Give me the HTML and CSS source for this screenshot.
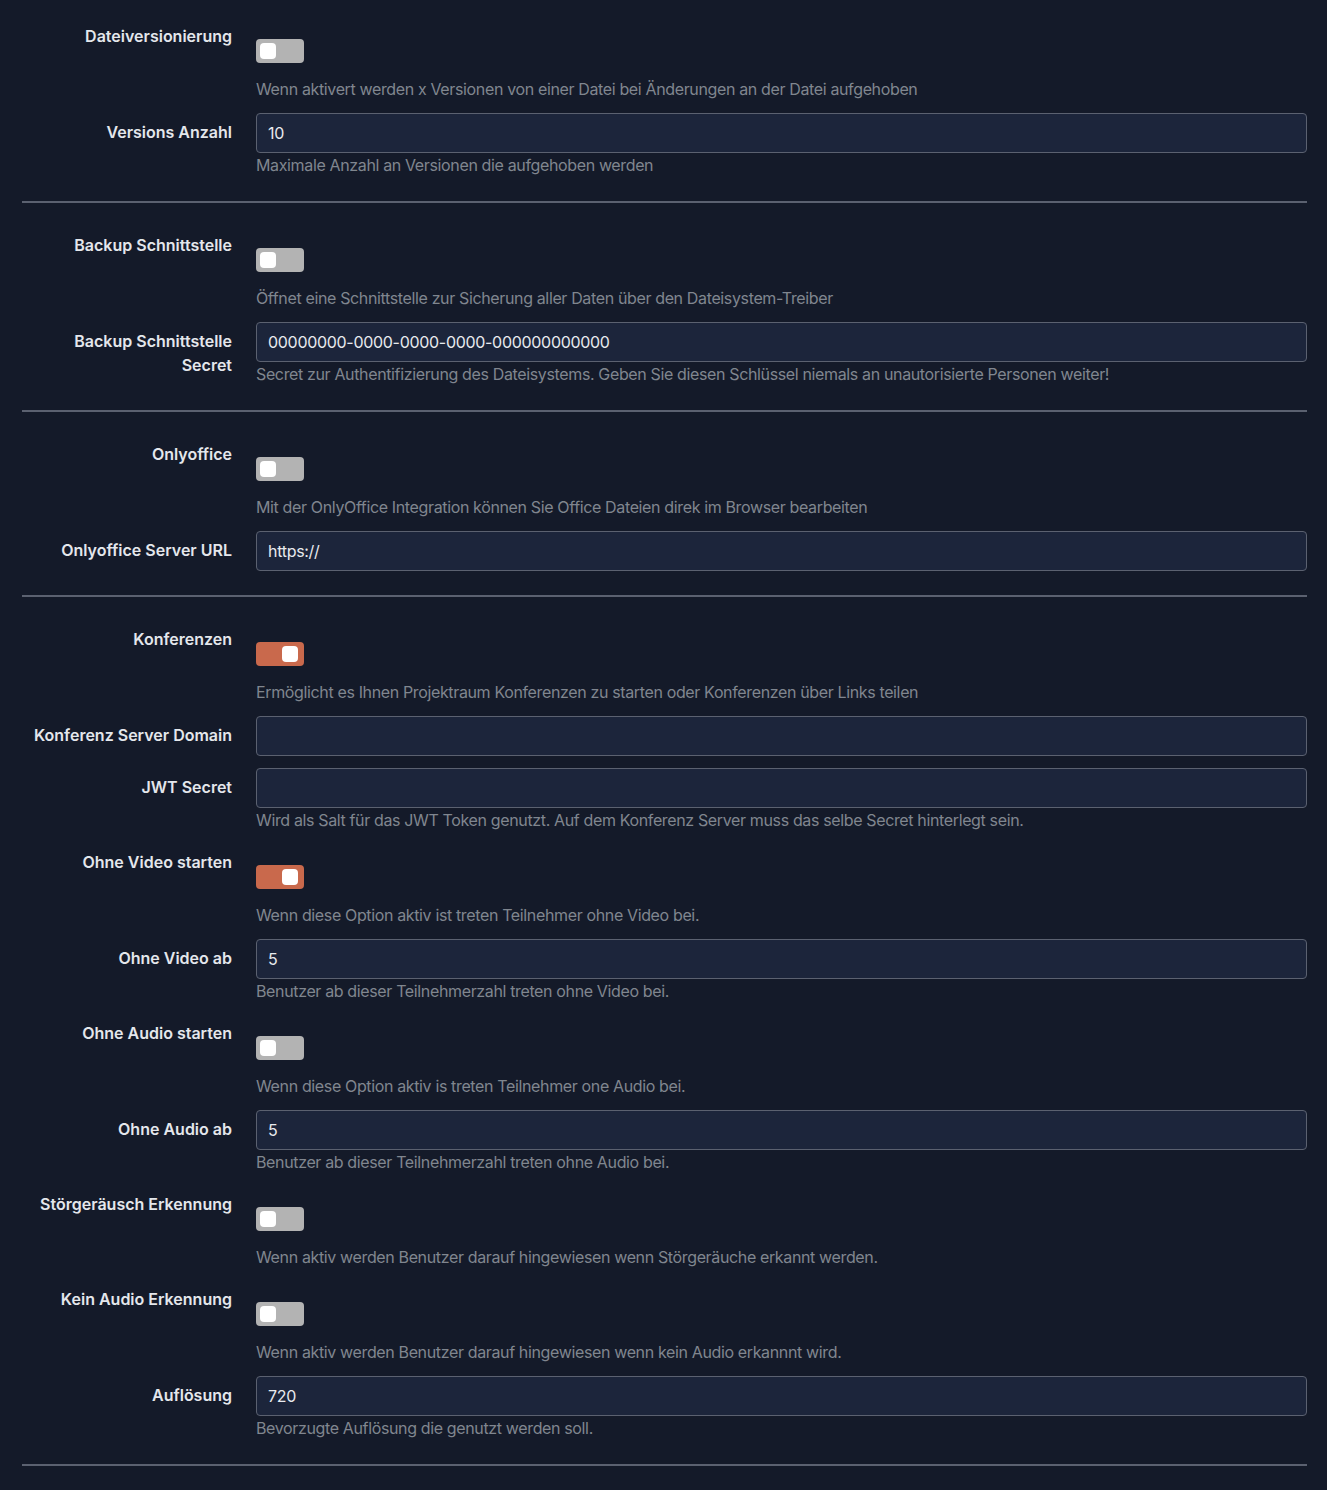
FILE: index.html
```html
<!DOCTYPE html>
<html lang="de">
<head>
<meta charset="utf-8">
<title>Einstellungen</title>
<link rel="stylesheet" href="styles.css">
</head>
<body>
<div class="settings">
  <section class="section">
    <div class="row toggle-row">
      <label class="label">Dateiversionierung</label>
      <div class="control">
        <span class="toggle"><span class="knob"></span></span>
        <div class="help">Wenn aktivert werden x Versionen von einer Datei bei Änderungen an der Datei aufgehoben</div>
      </div>
    </div>
    <div class="row input-row last">
      <label class="label">Versions Anzahl</label>
      <div class="control">
        <div class="input">10</div>
        <div class="help tight">Maximale Anzahl an Versionen die aufgehoben werden</div>
      </div>
    </div>
  </section>
  <hr class="divider">
  <section class="section">
    <div class="row toggle-row">
      <label class="label">Backup Schnittstelle</label>
      <div class="control">
        <span class="toggle"><span class="knob"></span></span>
        <div class="help">Öffnet eine Schnittstelle zur Sicherung aller Daten über den Dateisystem-Treiber</div>
      </div>
    </div>
    <div class="row input-row last">
      <label class="label">Backup Schnittstelle Secret</label>
      <div class="control">
        <div class="input">00000000-0000-0000-0000-000000000000</div>
        <div class="help tight">Secret zur Authentifizierung des Dateisystems. Geben Sie diesen Schlüssel niemals an unautorisierte Personen weiter!</div>
      </div>
    </div>
  </section>
  <hr class="divider">
  <section class="section">
    <div class="row toggle-row">
      <label class="label">Onlyoffice</label>
      <div class="control">
        <span class="toggle"><span class="knob"></span></span>
        <div class="help">Mit der OnlyOffice Integration können Sie Office Dateien direk im Browser bearbeiten</div>
      </div>
    </div>
    <div class="row input-row last nohelp">
      <label class="label">Onlyoffice Server URL</label>
      <div class="control">
        <div class="input">https://</div>
      </div>
    </div>
  </section>
  <hr class="divider">
  <section class="section">
    <div class="row toggle-row">
      <label class="label">Konferenzen</label>
      <div class="control">
        <span class="toggle on"><span class="knob"></span></span>
        <div class="help">Ermöglicht es Ihnen Projektraum Konferenzen zu starten oder Konferenzen über Links teilen</div>
      </div>
    </div>
    <div class="row input-row nohelp">
      <label class="label">Konferenz Server Domain</label>
      <div class="control">
        <div class="input"></div>
      </div>
    </div>
    <div class="row input-row">
      <label class="label">JWT Secret</label>
      <div class="control">
        <div class="input"></div>
        <div class="help tight">Wird als Salt für das JWT Token genutzt. Auf dem Konferenz Server muss das selbe Secret hinterlegt sein.</div>
      </div>
    </div>
    <div class="row toggle-row">
      <label class="label">Ohne Video starten</label>
      <div class="control">
        <span class="toggle on"><span class="knob"></span></span>
        <div class="help">Wenn diese Option aktiv ist treten Teilnehmer ohne Video bei.</div>
      </div>
    </div>
    <div class="row input-row">
      <label class="label">Ohne Video ab</label>
      <div class="control">
        <div class="input">5</div>
        <div class="help tight">Benutzer ab dieser Teilnehmerzahl treten ohne Video bei.</div>
      </div>
    </div>
    <div class="row toggle-row">
      <label class="label">Ohne Audio starten</label>
      <div class="control">
        <span class="toggle"><span class="knob"></span></span>
        <div class="help">Wenn diese Option aktiv is treten Teilnehmer one Audio bei.</div>
      </div>
    </div>
    <div class="row input-row">
      <label class="label">Ohne Audio ab</label>
      <div class="control">
        <div class="input">5</div>
        <div class="help tight">Benutzer ab dieser Teilnehmerzahl treten ohne Audio bei.</div>
      </div>
    </div>
    <div class="row toggle-row tight-row">
      <label class="label">Störgeräusch Erkennung</label>
      <div class="control">
        <span class="toggle"><span class="knob"></span></span>
        <div class="help">Wenn aktiv werden Benutzer darauf hingewiesen wenn Störgeräuche erkannt werden.</div>
      </div>
    </div>
    <div class="row toggle-row">
      <label class="label">Kein Audio Erkennung</label>
      <div class="control">
        <span class="toggle"><span class="knob"></span></span>
        <div class="help">Wenn aktiv werden Benutzer darauf hingewiesen wenn kein Audio erkannnt wird.</div>
      </div>
    </div>
    <div class="row input-row last">
      <label class="label">Auflösung</label>
      <div class="control">
        <div class="input">720</div>
        <div class="help tight">Bevorzugte Auflösung die genutzt werden soll.</div>
      </div>
    </div>
  </section>
  <hr class="divider">
</div>
</body>
</html>
```
FILE: styles.css
```css
html, body {
  margin: 0;
  padding: 0;
  background: #141a29;
}
body {
  font-family: Inter, "Noto Sans", "Liberation Sans", sans-serif;
  font-size: 16px;
  line-height: 24px;
  color: #e4e7ec;
}
.settings {
  padding: 17px 20px 24px 22px;
}
.section {
  display: flex;
  flex-direction: column;
}
.row {
  display: grid;
  grid-template-columns: 210px 1fr;
  column-gap: 24px;
  margin-bottom: 12px;
}
.row.tight-row {
  margin-bottom: 11px;
}
.row.input-row {
  margin-bottom: 11px;
}
.row.input-row.nohelp {
  margin-bottom: 12px;
}
.row.last,
.row.input-row.last {
  margin-bottom: 0;
}
.label {
  text-align: right;
  font-weight: 600;
  padding: 7px 0 0 10px;
  color: #e4e7ec;
}
.control {
  display: flex;
  flex-direction: column;
  align-items: flex-start;
  min-width: 0;
}
.toggle-row .control {
  padding-top: 22px;
}
.toggle {
  display: block;
  width: 48px;
  height: 24px;
  border-radius: 4px;
  background: #b3b3b3;
  box-sizing: border-box;
  padding: 4px;
}
.toggle .knob {
  display: block;
  width: 16px;
  height: 16px;
  border-radius: 4px;
  background: #ffffff;
}
.toggle.on {
  background: #c9694c;
}
.toggle.on .knob {
  margin-left: 22px;
}
.help {
  color: #80868f;
  margin-top: 14px;
  white-space: nowrap;
  letter-spacing: -0.36px;
}
.help.tight {
  margin-top: 0;
}
.input {
  box-sizing: border-box;
  width: 100%;
  height: 40px;
  padding: 7px 11px;
  background: #1c253b;
  border: 1px solid #5b6170;
  border-radius: 4px;
  color: #e8eaee;
  letter-spacing: -0.3px;
}
.divider {
  border: 0;
  height: 2px;
  background: #5b6170;
  margin: 24px 0 23px 0;
}
.settings > .divider:last-child {
  margin-bottom: 0;
}
```
